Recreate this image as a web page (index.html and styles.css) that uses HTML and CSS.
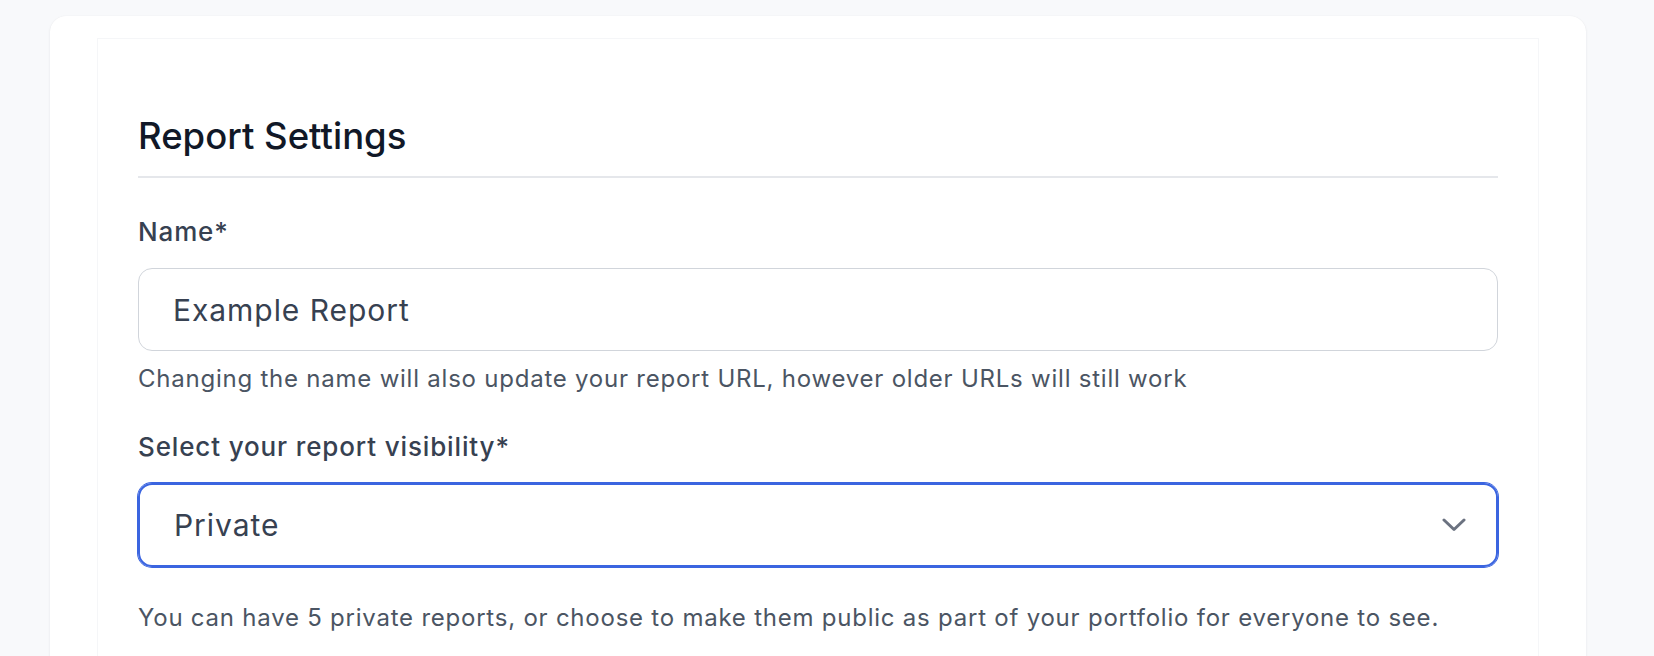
FILE: index.html
```html
<!DOCTYPE html>
<html lang="en">
<head>
<meta charset="utf-8">
<title>Report Settings</title>
<link rel="stylesheet" href="styles.css">
</head>
<body>
<div class="card">
  <div class="panel">
    <h2 class="title">Report Settings</h2>
    <div class="field field-name">
      <label class="label">Name*</label>
      <div class="input">Example Report</div>
      <p class="help help-name">Changing the name will also update your report URL, however older URLs will still work</p>
    </div>
    <div class="field field-visibility">
      <label class="label">Select your report visibility*</label>
      <div class="select">
        <span>Private</span>
        <svg class="chevron" width="24" height="14" viewBox="0 0 24 14" aria-hidden="true"><polyline points="2,2 12,11.5 22,2" fill="none" stroke="#6b7280" stroke-width="3" stroke-linecap="round" stroke-linejoin="round"/></svg>
      </div>
      <p class="help help-visibility">You can have 5 private reports, or choose to make them public as part of your portfolio for everyone to see.</p>
    </div>
  </div>
</div>
</body>
</html>
```
FILE: styles.css
```css
html, body {
  margin: 0;
  padding: 0;
}
body {
  background: #f8f9fb;
  font-family: Inter, "Noto Sans", sans-serif;
  padding: 16px 68px 0 50px;
  height: 656px;
  box-sizing: border-box;
  overflow: hidden;
}
.card {
  background: #ffffff;
  border-radius: 16px;
  box-shadow: 0 1px 3px rgba(17, 24, 39, 0.07), 0 0 1px rgba(17, 24, 39, 0.06);
  padding: 22px 47px 0 47px;
  min-height: 700px;
}
.panel {
  border: 1px solid #f5f6f8;
  border-bottom: none;
  padding: 73px 40px 0 40px;
  min-height: 700px;
}
.title {
  margin: 0;
  font-size: 36.5px;
  line-height: 48px;
  font-weight: 500;
  color: #111827;
  padding-bottom: 16px;
  border-bottom: 2px solid #e5e7eb;
}
.label {
  display: block;
  font-size: 26px;
  line-height: 36px;
  font-weight: 500;
  letter-spacing: 0.86px;
  color: #374151;
}
.field-name {
  margin-top: 36px;
}
.field-visibility {
  margin-top: 34px;
}
.input {
  margin-top: 18px;
  height: 83px;
  box-sizing: border-box;
  border: 1.5px solid #d1d5db;
  border-radius: 14px;
  padding: 0 34px;
  display: flex;
  align-items: center;
  font-size: 30px;
  letter-spacing: 0.95px;
  color: #374151;
}
.select {
  margin-top: 18px;
  height: 84px;
  box-sizing: border-box;
  border: 2px solid #3b65e0;
  box-shadow: 0 0 0 1px #3b65e0;
  border-radius: 14px;
  padding: 0 30px 0 34px;
  display: flex;
  align-items: center;
  justify-content: space-between;
  font-size: 30px;
  letter-spacing: 0.95px;
  color: #374151;
}
.chevron {
  display: block;
}
.help {
  margin: 0;
  font-size: 24px;
  line-height: 32px;
  letter-spacing: 0.77px;
  color: #4b5563;
}
.help-name {
  margin-top: 12px;
}
.help-visibility {
  margin-top: 35px;
}
```
